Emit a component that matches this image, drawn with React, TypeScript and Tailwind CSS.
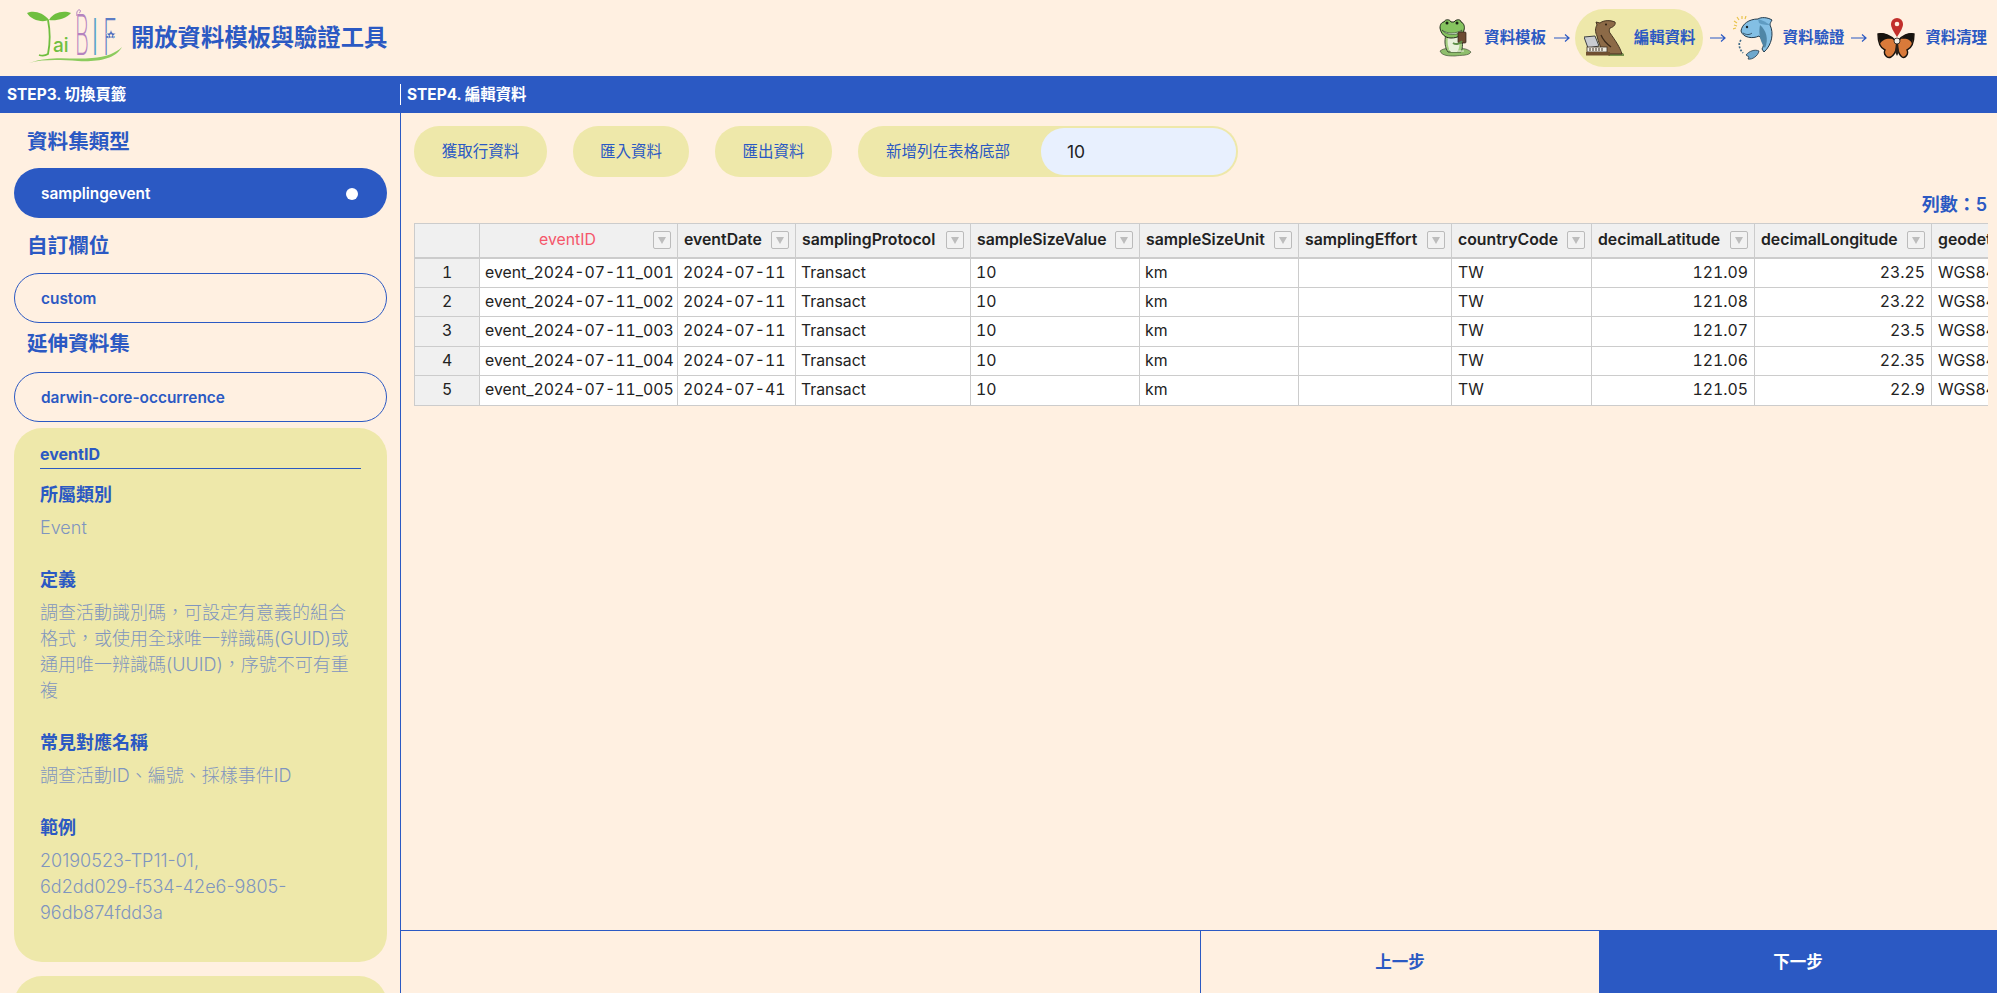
import React from "react";

const latin = "font-['Inter','Noto_Sans_CJK_TC',sans-serif]";

const columns = [
  { name: "", w: "w-[65px]" },
  { name: "eventID", w: "w-[198px]" },
  { name: "eventDate", w: "w-[118px]" },
  { name: "samplingProtocol", w: "w-[175px]" },
  { name: "sampleSizeValue", w: "w-[169px]" },
  { name: "sampleSizeUnit", w: "w-[159px]" },
  { name: "samplingEffort", w: "w-[153px]" },
  { name: "countryCode", w: "w-[140px]" },
  { name: "decimalLatitude", w: "w-[163px]" },
  { name: "decimalLongitude", w: "w-[177px]" },
  { name: "geodeticDatum", w: "w-[140px]" },
];

const rows = [
  ["event_2024-07-11_001", "2024-07-11", "121.09", "23.25"],
  ["event_2024-07-11_002", "2024-07-11", "121.08", "23.22"],
  ["event_2024-07-11_003", "2024-07-11", "121.07", "23.5"],
  ["event_2024-07-11_004", "2024-07-11", "121.06", "22.35"],
  ["event_2024-07-11_005", "2024-07-41", "121.05", "22.9"],
];

const Logo = () => (
  <svg viewBox="27 0 96 76" className="w-[96px] h-[76px] shrink-0">
    <path d="M49 20C43 12 33 10 27 13C31 20 42 23 49 20Z" fill="#6fbf3f" />
    <path d="M49 20C53 12 64 10 71 13C66 19 56 21 49 20Z" fill="#6fbf3f" />
    <path d="M48 20C50 30 50 44 48 54C45 56 42 56 39 55" fill="none" stroke="#6fbf3f" strokeWidth="1.8" />
    <text x="53" y="52" fontSize="19" fontFamily="Inter" fontWeight="500" fill="#6fbf3f">ai</text>
    <path d="M77 16C76 12 78 9 80 10C81 11 80 13 79 13" fill="none" stroke="#b583bf" strokeWidth="1" />
    <text x="75" y="55" fontSize="56" fontFamily="Inter" fontWeight="200" fill="#b583bf" textLength="14" lengthAdjust="spacingAndGlyphs">B</text>
    <text x="92" y="55" fontSize="50" fontFamily="Inter" fontWeight="300" fill="#5aa3c9" textLength="6" lengthAdjust="spacingAndGlyphs">I</text>
    <text x="103" y="55" fontSize="50" fontFamily="Inter" fontWeight="200" fill="#5c7cc4" textLength="14" lengthAdjust="spacingAndGlyphs">F</text>
    <path d="M111 30l1.5 3 3.2.4-2.3 2.2.6 3.2-3-1.5-2.9 1.5.6-3.2-2.3-2.2 3.2-.4Z" fill="#4f6fc0" stroke="#fff0e1" strokeWidth=".5" />
    <circle cx="111" cy="35.5" r="1.2" fill="#fff0e1" />
    <path d="M29 63C52 55 70 60 92 58C106 57 116 53 122 47C115 60 95 62 78 61C60 60 44 59 29 63Z" fill="#8ccb5e" />
  </svg>
);

const Frog = () => (
  <svg viewBox="0 0 33 38" className="w-[33px] h-[38px] shrink-0">
    <path d="M1 32C6 28 12 30 16 30C22 29 28 29 32 33C30 37 22 36 16 37C10 37 3 37 1 32Z" fill="#8fbe6c" stroke="#33402a" strokeWidth=".6" />
    <path d="M7 16C5 22 6 29 9 33H22C24 29 24 22 22 16Z" fill="#a5d082" stroke="#2f3a28" strokeWidth=".9" />
    <path d="M9 18C8 23 9 30 12 33H18C21 29 21 23 20 18Z" fill="#e8f0da" />
    <path d="M1 9C1 5 3 3 5 3C6 0 11 0 12 3H15C17 0 22 0 22 3C25 4 26 8 25 11C24 16 19 19 12 19C6 19 2 15 1 9Z" fill="#86c460" stroke="#1f2a18" strokeWidth="1" />
    <circle cx="8" cy="4" r="1.5" fill="#1a2414" />
    <circle cx="18" cy="4" r="1.5" fill="#1a2414" />
    <path d="M3 11C8 15 17 15 23 11C21 17 7 17 3 11Z" fill="#d6edcf" stroke="#2f3a28" strokeWidth=".6" />
    <rect x="19" y="13" width="8" height="11" rx="1" fill="#6e4a32" stroke="#2f2118" strokeWidth=".7" />
    <path d="M14 24C17 26 21 25 23 22" fill="none" stroke="#5f8f48" strokeWidth="2" />
    <path d="M10 30C14 33 19 32 25 32" fill="none" stroke="#e8f0da" strokeWidth="1.2" />
  </svg>
);

const Capybara = () => (
  <svg viewBox="0 0 40 37" className="w-[40px] h-[37px] shrink-0">
    <path d="M28 31C31 32 36 31 40 34V36H24Z" fill="#78934f" />
    <path d="M13 5L12 2L16 3C20 0 26 0 31 2C32 4 30 7 26 8C25 10 25 12 26 13C31 20 36 27 38 34H18C18 28 14 22 13 16C11 12 11 8 13 5Z" fill="#8c6a47" stroke="#3b2a1b" strokeWidth=".9" />
    <circle cx="22" cy="4.5" r=".9" fill="#20150c" />
    <path d="M17 15C19 20 23 24 27 27" fill="none" stroke="#3b2a1b" strokeWidth="1.3" />
    <path d="M0 17L11 16L15 26L4 28Z" fill="#c9ccd1" stroke="#3c3f44" strokeWidth="1" />
    <rect x="3" y="27" width="20" height="5" fill="#efece2" stroke="#3c3024" strokeWidth=".8" />
    <path d="M6 28V31M9 28V31M12 28V31M15 28V31M18 28V31" stroke="#3c3024" strokeWidth="1" />
    <rect x="2" y="32" width="24" height="3.5" fill="#6f4f30" />
  </svg>
);

const Fish = () => (
  <svg viewBox="0 0 41 44" className="w-[41px] h-[44px] shrink-0">
    <path d="M1 9L4 10M1 5L4 7M4 1L6 4M9 0L9 3M13 0L12 3M0 13L3 12" stroke="#e8c34a" strokeWidth="1.2" />
    <path d="M8 15C9 8 16 3 25 3C28 1 34 1 39 4C38 6 37 7 37 9C41 17 39 29 31 36L29 33C32 28 30 24 26 20C20 23 10 22 8 15Z" fill="#83bfe4" stroke="#243b4c" strokeWidth="1" />
    <path d="M27 9C33 14 36 23 32 32C28 27 25 19 27 9Z" fill="#4f86a6" />
    <path d="M25 3C29 4 33 6 37 9C35 9 30 9 26 7Z" fill="#5f9cc2" />
    <circle cx="14" cy="11" r="1.2" fill="#14212b" />
    <path d="M10 17C13 19 17 19 19 17" fill="none" stroke="#243b4c" strokeWidth=".8" />
    <path d="M8 24C5 27 6 33 10 37" fill="none" stroke="#3f6b87" strokeWidth="1.7" strokeDasharray="2 1.4" />
    <path d="M13 39C16 35 22 33 26 35C25 40 19 44 15 43L16 41Z" fill="#6ea7cc" stroke="#243b4c" strokeWidth=".8" />
  </svg>
);

const Butterfly = () => (
  <svg viewBox="0 0 38 42" className="w-[38px] h-[42px] shrink-0">
    <path d="M20 25C14 18 6 16 1 17C1 25 3 31 8 33C6 37 10 42 14 40C17 38 19 34 20 30Z" fill="#d97a3a" stroke="#17130f" strokeWidth="1.4" />
    <path d="M20 25C25 18 32 16 37 17C37 25 35 31 30 33C32 37 28 42 25 40C22 38 21 34 20 30Z" fill="#d97a3a" stroke="#17130f" strokeWidth="1.4" />
    <path d="M1 17C6 15 12 18 16 22C9 21 5 23 3 27Z" fill="#17130f" />
    <path d="M37 17C32 15 28 18 24 22C30 21 34 23 35 27Z" fill="#17130f" />
    <path d="M19 25H21L22 35L20 39L18 35Z" fill="#2a211a" />
    <circle cx="20" cy="24" r="3" fill="#f3efe6" stroke="#17130f" strokeWidth=".8" />
    <path d="M20 20C16 14 14 10 14 7A6 6 0 0 1 26 7C26 10 24 14 20 20Z" fill="#c22f2b" />
    <circle cx="20" cy="7" r="2.3" fill="#fff0e1" />
  </svg>
);

const Arrow = () => (
  <svg viewBox="0 0 16 10" className="w-[16px] h-[10px] shrink-0">
    <path d="M0 5H15M11 1.5L15 5L11 8.5" fill="none" stroke="#2b59c3" strokeWidth="1.2" />
  </svg>
);

const FilterButton = () => (
  <span className="shrink-0 w-[18px] h-[18px] border border-[#bbb] rounded-[2px] bg-[#f2f2f2] flex items-center justify-center">
    <span className="w-0 h-0 border-x-[4px] border-x-transparent border-t-[7px] border-t-[#bdbdbd]" />
  </span>
);

const StepLabel = ({ children }: { children: React.ReactNode }) => (
  <span className="text-[15.4px] font-semibold text-[#2b59c3] whitespace-nowrap">{children}</span>
);

const SideHeading = ({ children, className }: { children: React.ReactNode; className: string }) => (
  <h2 className={`h-[30px] flex items-center pl-[13px] text-[20.6px] font-bold text-[#2b59c3] ${className}`}>{children}</h2>
);

const Term = ({ title, children, mb }: { title: string; children: React.ReactNode; mb: string }) => (
  <div className={mb}>
    <h3 className="text-[18px] leading-[26px] font-bold text-[#2b59c3] mb-[7px]">{title}</h3>
    <p className="text-[18px] leading-[26px] font-light text-[#7f95bf] break-words">{children}</p>
  </div>
);

export default function App() {
  return (
    <div className={`w-full h-screen overflow-hidden flex flex-col bg-[#fff0e1] ${latin}`}>
      {/* Top header */}
      <header className="h-[76px] shrink-0 flex items-center justify-between pl-[27px] pr-[10px]">
        <div className="flex items-center gap-[8px]">
          <Logo />
          <h1 className="text-[23.3px] font-semibold text-[#2b59c3] whitespace-nowrap">開放資料模板與驗證工具</h1>
        </div>
        <nav className="flex items-center">
          <Frog />
          <span className="w-[12px]" />
          <StepLabel>資料模板</StepLabel>
          <span className="w-[8px]" />
          <Arrow />
          <span className="w-[5px]" />
          <div className="h-[58px] w-[128px] rounded-[29px] bg-[#eee8aa] flex items-center pl-[9px] gap-[10px]">
            <Capybara />
            <StepLabel>編輯資料</StepLabel>
          </div>
          <span className="w-[7px]" />
          <Arrow />
          <span className="w-[7px]" />
          <Fish />
          <span className="w-[9px]" />
          <StepLabel>資料驗證</StepLabel>
          <span className="w-[7px]" />
          <Arrow />
          <span className="w-[10px]" />
          <Butterfly />
          <span className="w-[10px]" />
          <StepLabel>資料清理</StepLabel>
        </nav>
      </header>

      {/* Step bar */}
      <div className="h-[37px] shrink-0 flex items-center bg-[#2b59c3] text-white text-[15.4px] font-bold">
        <div className="w-[400px] pl-[7px]">STEP3. 切換頁籤</div>
        <div className="border-l border-white h-[21px] pl-[6px] flex items-center">STEP4. 編輯資料</div>
      </div>

      <div className="flex-1 flex min-h-0">
        {/* Sidebar */}
        <aside className="w-[401px] shrink-0 border-r border-[#2b59c3] pl-[14px] pt-[14px] overflow-hidden">
          <SideHeading className="mb-[11px]">資料集類型</SideHeading>
          <div className="h-[50px] w-[373px] rounded-[25px] bg-[#2b59c3] flex items-center justify-between pl-[27px] pr-[29px] pt-[1px] text-white text-[15.4px] font-semibold">
            samplingevent
            <span className="w-[12px] h-[12px] rounded-full bg-white" />
          </div>
          <SideHeading className="mt-[13px] mb-[12px]">自訂欄位</SideHeading>
          <div className="h-[50px] w-[373px] rounded-[25px] border border-[#2b59c3] flex items-center pl-[26px] pt-[1px] text-[#2b59c3] text-[15.4px] font-semibold">
            custom
          </div>
          <SideHeading className="mt-[6px] mb-[13px]">延伸資料集</SideHeading>
          <div className="h-[50px] w-[373px] rounded-[25px] border border-[#2b59c3] flex items-center pl-[26px] pt-[1px] text-[#2b59c3] text-[15.4px] font-semibold">
            darwin-core-occurrence
          </div>

          <section className="mt-[6px] w-[373px] h-[534px] rounded-[28px] bg-[#eee8aa] px-[26px] pt-[15px]">
            <div className="text-[16px] leading-[22px] pb-[3px] font-bold text-[#2b59c3] border-b border-[#2b59c3] mb-[13px]">eventID</div>
            <Term title="所屬類別" mb="mb-[26px]">Event</Term>
            <Term title="定義" mb="mb-[26px]">調查活動識別碼，可設定有意義的組合格式，或使用全球唯一辨識碼(GUID)或通用唯一辨識碼(UUID)，序號不可有重複</Term>
            <Term title="常見對應名稱" mb="mb-[26px]">調查活動ID、編號、採樣事件ID</Term>
            <Term title="範例" mb="mb-0">
              20190523-TP11-01,
              <br />
              6d2dd029-f534-42e6-9805-
              <br />
              96db874fdd3a
            </Term>
          </section>
          <section className="mt-[14px] w-[373px] h-[200px] rounded-[28px] bg-[#eee8aa]" />
        </aside>

        {/* Main */}
        <main className="flex-1 min-w-0 flex flex-col">
          <div className="flex-1 min-h-0 pl-[13px] pr-[9px] pt-[13px]">
            <div className="flex items-center gap-[26px] text-[15.5px] text-[#2b59c3]">
              <button className="h-[51px] w-[133px] rounded-[25px] bg-[#eee8aa]">獲取行資料</button>
              <button className="h-[51px] w-[116px] rounded-[25px] bg-[#eee8aa]">匯入資料</button>
              <button className="h-[51px] w-[117px] rounded-[25px] bg-[#eee8aa]">匯出資料</button>
              <div className="h-[51px] w-[380px] rounded-[25px] bg-[#eee8aa] flex items-center pl-[28px] pr-[2px]">
                <span className="w-[155px] whitespace-nowrap">新增列在表格底部</span>
                <input
                  defaultValue="10"
                  className="h-[47px] w-[195px] rounded-[23px] bg-[#e8f0fe] pl-[26px] text-[17.5px] text-[#222] outline-none"
                />
              </div>
            </div>

            <div className="h-[46px] pt-[16px] pr-[1px] text-right text-[18px] leading-[24px] font-semibold text-[#2b59c3]">列數：5</div>

            <div className="overflow-hidden">
              <table className="table-fixed border-collapse w-[1657px] text-[15.8px] text-[#222] [font-variant-numeric:tabular-nums]">
                <colgroup>
                  {columns.map((c) => (
                    <col key={c.name} className={c.w} />
                  ))}
                </colgroup>
                <thead>
                  <tr className="h-[34px] bg-[#f0f0f0] border-b-2 border-[#ccc]">
                    {columns.map((c, i) => (
                      <th key={c.name} className="border border-[#ccc] pl-[6px] pr-[6px] font-semibold text-left">
                        {i > 0 && (
                          <div className="flex items-center justify-between gap-[4px]">
                            <span className={c.name === "eventID" ? "flex-1 text-center text-[#f5566a] font-normal" : "whitespace-nowrap"}>{c.name}</span>
                            {i < 10 && <FilterButton />}
                          </div>
                        )}
                      </th>
                    ))}
                  </tr>
                </thead>
                <tbody>
                  {rows.map((r, i) => (
                    <tr key={r[0]} className="h-[29.5px] bg-white">
                      <td className="border border-[#ccc] bg-[#f0f0f0] text-center">{i + 1}</td>
                      <td className="border border-[#ccc] px-[5px] whitespace-nowrap">{r[0]}</td>
                      <td className="border border-[#ccc] px-[5px]">{r[1]}</td>
                      <td className="border border-[#ccc] px-[5px]">Transact</td>
                      <td className="border border-[#ccc] px-[5px]">10</td>
                      <td className="border border-[#ccc] px-[5px]">km</td>
                      <td className="border border-[#ccc] px-[5px]"></td>
                      <td className="border border-[#ccc] px-[6px]">TW</td>
                      <td className="border border-[#ccc] px-[6px] text-right">{r[2]}</td>
                      <td className="border border-[#ccc] px-[6px] text-right">{r[3]}</td>
                      <td className="border border-[#ccc] px-[6px]">WGS84</td>
                    </tr>
                  ))}
                </tbody>
              </table>
            </div>
          </div>

          {/* Bottom buttons */}
          <div className="h-[63px] shrink-0 flex border-t border-[#2b59c3] text-[16.5px] font-semibold">
            <div className="flex-1 border-r border-[#2b59c3]" />
            <button className="w-[398px] text-[#2b59c3]">上一步</button>
            <button className="w-[398px] bg-[#2b59c3] text-white">下一步</button>
          </div>
        </main>
      </div>
    </div>
  );
}
